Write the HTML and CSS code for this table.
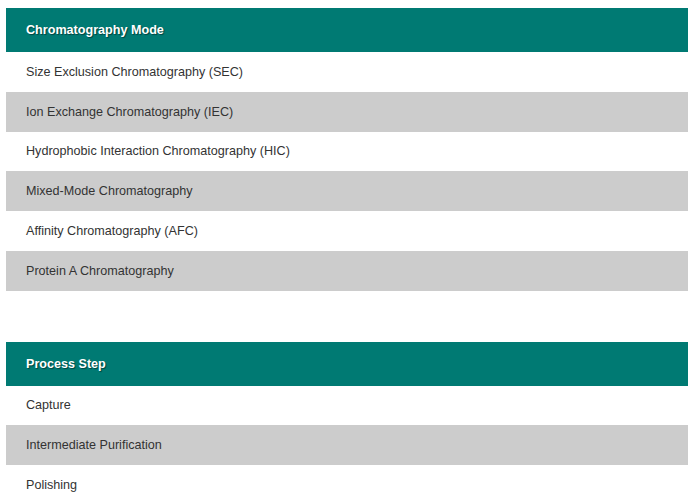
FILE: index.html
```html
<!DOCTYPE html>
<html>
<head>
<meta charset="utf-8">
<link rel="stylesheet" href="styles.css">
</head>
<body>
<div class="page">
  <section class="group">
    <div class="head">Chromatography Mode</div>
    <div class="row">Size Exclusion Chromatography (SEC)</div>
    <div class="row alt">Ion Exchange Chromatography (IEC)</div>
    <div class="row">Hydrophobic Interaction Chromatography (HIC)</div>
    <div class="row alt">Mixed-Mode Chromatography</div>
    <div class="row">Affinity Chromatography (AFC)</div>
    <div class="row alt">Protein A Chromatography</div>
  </section>
  <section class="group">
    <div class="head">Process Step</div>
    <div class="row">Capture</div>
    <div class="row alt">Intermediate Purification</div>
    <div class="row">Polishing</div>
  </section>
</div>
</body>
</html>
```

FILE: styles.css
```css
html, body {
  margin: 0;
  padding: 0;
  background: #ffffff;
}
.page {
  padding: 8px 6px 0 6px;
  font-family: "Liberation Sans", Arial, sans-serif;
  font-size: 12.6px;
  color: #333333;
}
.group {
  display: flex;
  flex-direction: column;
  margin-bottom: 51px;
}
.head {
  height: 44px;
  display: flex;
  align-items: center;
  padding-left: 20px;
  background: #007a73;
  color: #ffffff;
  font-weight: bold;
  text-shadow: 1px 1px 1px rgba(0, 0, 0, 0.45);
}
.row {
  height: 39.75px;
  display: flex;
  align-items: center;
  padding-left: 20px;
  background: #ffffff;
}
.row.alt {
  background: #cccccc;
}
```
